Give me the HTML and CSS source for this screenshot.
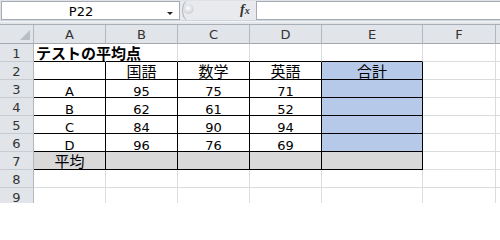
FILE: index.html
```html
<!DOCTYPE html>
<html lang="ja">
<head>
<meta charset="utf-8">
<title>テストの平均点</title>
<link rel="stylesheet" href="styles.css">
</head>
<body>
<div class="fbar">
  <div class="namebox"><span class="name">P22</span><span class="arrow"></span></div>
  <div class="mid">
    <svg class="grip" width="14" height="19" viewBox="0 0 14 19">
      <defs>
        <radialGradient id="g" cx="0.45" cy="0.4" r="0.6">
          <stop offset="0" stop-color="#ffffff"/>
          <stop offset="1" stop-color="#c9cdd3"/>
        </radialGradient>
      </defs>
      <path d="M6 0.5 C1.5 3 1.5 16 6 18.5" fill="none" stroke="#aab0b8" stroke-width="1"/>
      <circle cx="8.5" cy="8" r="5" fill="url(#g)"/>
    </svg>
    <span class="fx"><i>f</i><i class="x">x</i></span>
  </div>
  <div class="formula"></div>
</div>
<div class="sep"></div>
<div class="sheet">
  <div class="corner"><span class="tri"></span></div>
  <div class="ch">A</div><div class="ch">B</div><div class="ch">C</div><div class="ch">D</div><div class="ch">E</div><div class="ch">F</div><div class="ch last"></div>

  <div class="rh">1</div>
  <div class="c title bb"><span class="jp">テストの平均点</span></div>
  <div class="c bb"></div><div class="c bb"></div><div class="c bb"></div><div class="c bb"></div><div class="c"></div><div class="c last"></div>

  <div class="rh">2</div>
  <div class="c bb br"></div>
  <div class="c bb br"><span class="jp">国語</span></div>
  <div class="c bb br"><span class="jp">数学</span></div>
  <div class="c bb br"><span class="jp">英語</span></div>
  <div class="c bb br blue"><span class="jp">合計</span></div>
  <div class="c"></div><div class="c last"></div>

  <div class="rh">3</div>
  <div class="c bb br">A</div><div class="c bb br">95</div><div class="c bb br">75</div><div class="c bb br">71</div><div class="c bb br blue"></div>
  <div class="c"></div><div class="c last"></div>

  <div class="rh">4</div>
  <div class="c bb br">B</div><div class="c bb br">62</div><div class="c bb br">61</div><div class="c bb br">52</div><div class="c bb br blue"></div>
  <div class="c"></div><div class="c last"></div>

  <div class="rh">5</div>
  <div class="c bb br">C</div><div class="c bb br">84</div><div class="c bb br">90</div><div class="c bb br">94</div><div class="c bb br blue"></div>
  <div class="c"></div><div class="c last"></div>

  <div class="rh">6</div>
  <div class="c bb br">D</div><div class="c bb br">96</div><div class="c bb br">76</div><div class="c bb br">69</div><div class="c bb br blue"></div>
  <div class="c"></div><div class="c last"></div>

  <div class="rh">7</div>
  <div class="c bb br gray"><span class="jp">平均</span></div><div class="c bb br gray"></div><div class="c bb br gray"></div><div class="c bb br gray"></div><div class="c bb br gray"></div>
  <div class="c"></div><div class="c last"></div>

  <div class="rh">8</div>
  <div class="c"></div><div class="c"></div><div class="c"></div><div class="c"></div><div class="c"></div><div class="c"></div><div class="c last"></div>

  <div class="rh">9</div>
  <div class="c"></div><div class="c"></div><div class="c"></div><div class="c"></div><div class="c"></div><div class="c"></div><div class="c last"></div>
</div>
</body>
</html>
```

FILE: styles.css
```css
html, body {
  margin: 0;
  padding: 0;
}
body {
  width: 500px;
  height: 203px;
  overflow: hidden;
  background: #ffffff;
  font-family: "DejaVu Sans", "Noto Sans CJK JP", sans-serif;
  font-size: 13px;
  color: #000;
}
* { box-sizing: border-box; }

/* formula bar */
.fbar {
  display: flex;
  height: 20px;
  padding-top: 1px;
  background: #dfe3e8;
}
.namebox {
  display: flex;
  width: 179px;
  height: 19px;
  margin-left: 1px;
  background: #fff;
  border: 1px solid #a5acb5;
}
.name {
  width: 158px;
  text-align: center;
  padding-top: 3px;
  line-height: 13px;
  color: #000;
}
.arrow {
  width: 0;
  height: 0;
  margin-top: 10px;
  margin-left: 7px;
  border-top: 3px solid #222;
  border-left: 3px solid transparent;
  border-right: 3px solid transparent;
}
.mid {
  display: flex;
  align-items: flex-start;
  width: 76px;
  height: 19px;
  background: #e8eaed;
}
.grip {
  display: block;
}
.fx {
  margin-left: 46px;
  margin-top: 2px;
  font-family: "Liberation Serif", serif;
  font-weight: bold;
  color: #333;
  line-height: 14px;
}
.fx i { font-size: 14px; }
.fx .x { font-size: 10px; }
.formula {
  flex: 1;
  height: 19px;
  background: #fff;
  border: 1px solid #a5acb5;
  border-right: none;
}
.sep {
  height: 5px;
  background: linear-gradient(#cfd4da 0 1px, #f5f6f8 1px 2px, #e3e6ea 2px 4px, #a9afb6 4px 5px);
}

/* sheet grid */
.sheet {
  display: grid;
  grid-template-columns: 34px 72px 72px 72px 72px 101px 73px 4px;
  grid-template-rows: 19px repeat(9, 18px);
}
.corner {
  position: relative;
  background: #e1e4e8;
  border-right: 1px solid #b3b8be;
  border-bottom: 1px solid #a4a9af;
}
.tri {
  position: absolute;
  right: 3px;
  bottom: 3px;
  width: 0;
  height: 0;
  border-left: 10px solid transparent;
  border-bottom: 10px solid #b9bec4;
}
.ch {
  background: #e1e4e8;
  border-right: 1px solid #b3b8be;
  border-bottom: 1px solid #a4a9af;
  text-align: center;
  padding-top: 3px;
  line-height: 13px;
  color: #333;
}
.rh {
  background: #e1e4e8;
  border-right: 1px solid #b3b8be;
  border-bottom: 1px solid #c8ccd1;
  text-align: center;
  padding-top: 3px;
  line-height: 13px;
  color: #333;
}
.c {
  border-right: 1px solid #dadcdd;
  border-bottom: 1px solid #dadcdd;
  text-align: center;
  padding-top: 5px;
  line-height: 13px;
  white-space: nowrap;
}
.ch.last, .c.last { border-right: none; }
.c.bb { border-bottom-color: #000; }
.c.br { border-right-color: #000; }
.c.blue { background: #b7c9e8; }
.c.gray { background: #d9d9d9; }
.c.title {
  text-align: left;
  padding-left: 2px;
  border-right-color: transparent;
  font-weight: bold;
}
.jp {
  font-size: 15px;
  line-height: 0;
  vertical-align: 1px;
}
```
